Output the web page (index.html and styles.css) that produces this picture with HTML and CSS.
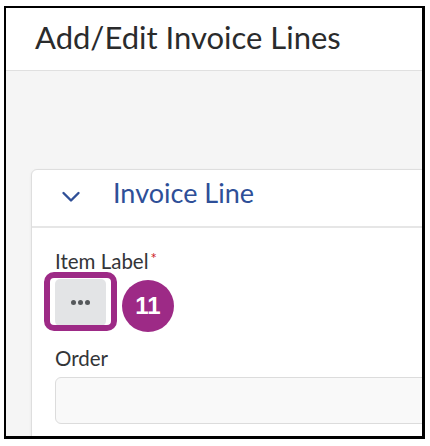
FILE: index.html
```html
<!DOCTYPE html>
<html lang="en">
<head>
<meta charset="utf-8">
<title>Add/Edit Invoice Lines</title>
<link rel="stylesheet" href="styles.css">
</head>
<body>
<div class="frame">
  <header class="page-header">
    <h1 class="page-title">Add/Edit Invoice Lines</h1>
  </header>
  <main class="content">
    <section class="card">
      <div class="card-header">
        <svg class="chevron" width="20" height="14" viewBox="0 0 20 14" aria-hidden="true">
          <polyline points="2.5,3 10,10.5 17.5,3" fill="none" stroke="#2f4f97" stroke-width="2.4" stroke-linecap="round" stroke-linejoin="round"/>
        </svg>
        <h2 class="card-title">Invoice Line</h2>
      </div>
      <div class="card-body">
        <div class="field-label">Item Label<span class="req">*</span></div>
        <div class="btn-wrap">
          <button class="dots-btn" type="button" aria-label="More">
            <span class="dot"></span><span class="dot"></span><span class="dot"></span>
          </button>
          <span class="ring"></span>
          <span class="badge">11</span>
        </div>
        <div class="field-label order-label">Order</div>
        <div class="text-input"></div>
      </div>
    </section>
  </main>
</div>
</body>
</html>
```

FILE: styles.css
```css
html, body {
  margin: 0;
  padding: 0;
  background: #ffffff;
}

body {
  padding: 6px 5px 0 4px;
  font-family: Lato, "Open Sans", sans-serif;
}

.frame {
  width: 416px;
  height: 428px;
  border-style: solid;
  border-color: #000;
  border-width: 2px 3px 3px 2px;
  overflow: hidden;
  background: #f5f5f5;
  display: flex;
  flex-direction: column;
}

.page-header {
  background: #ffffff;
  border-bottom: 1px solid #e0e0e0;
  padding: 10px 0 14px 29px;
  flex: none;
}

.page-title {
  margin: 0;
  font-size: 31px;
  line-height: 38px;
  font-weight: 400;
  color: #2a2b2c;
  white-space: nowrap;
}

.content {
  flex: 1;
  padding: 98px 0 0 25px;
}

.card {
  width: 440px;
  background: #ffffff;
  border: 1px solid #dedede;
  border-radius: 6px;
  box-shadow: 0 1px 3px rgba(0, 0, 0, 0.06);
}

.card-header {
  display: flex;
  align-items: center;
  padding: 7px 0 17px 29px;
  border-bottom: 2px solid #e6e6e6;
}

.chevron {
  flex: none;
  margin-top: 8px;
}

.card-title {
  margin: 0 0 0 32px;
  font-size: 27px;
  line-height: 32px;
  font-weight: 400;
  color: #2e4f98;
  white-space: nowrap;
}

.card-body {
  padding: 21px 0 20px 23px;
}

.field-label {
  font-size: 20.5px;
  line-height: 24px;
  color: #333538;
}

.req {
  color: #cd2026;
  font-size: 15px;
  vertical-align: top;
  position: relative;
  top: -3px;
  margin-left: 2px;
}

.btn-wrap {
  position: relative;
  width: 51px;
  height: 47px;
  margin-top: 6px;
}

.dots-btn {
  width: 51px;
  height: 47px;
  border: none;
  border-radius: 5px;
  background: #e3e4e6;
  display: flex;
  align-items: center;
  justify-content: center;
  gap: 2px;
  padding: 0;
}

.dot {
  width: 5px;
  height: 5px;
  border-radius: 50%;
  background: #55585b;
}

.ring {
  position: absolute;
  left: -11px;
  top: -7px;
  right: -11px;
  bottom: -5px;
  border: 6px solid #9d2a86;
  border-radius: 10px;
}

.badge {
  position: absolute;
  left: 67px;
  top: 1px;
  width: 52px;
  height: 52px;
  border-radius: 50%;
  background: #9d2a86;
  color: #ffffff;
  font-family: "Liberation Sans", Arial, sans-serif;
  font-weight: 700;
  font-size: 24px;
  display: flex;
  align-items: center;
  justify-content: center;
}

.order-label {
  margin-top: 20px;
}

.text-input {
  margin-top: 7px;
  height: 45px;
  border: 1px solid #dcdcdc;
  border-radius: 6px;
  background: #f9f9f9;
}
```
